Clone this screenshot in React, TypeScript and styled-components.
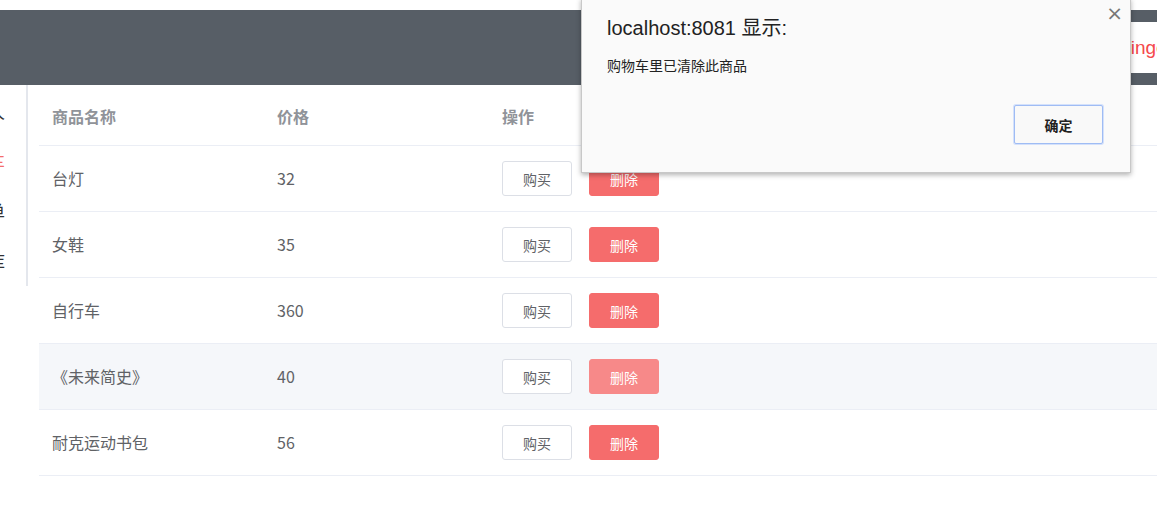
import React from "react";
import styled, { createGlobalStyle, css } from "styled-components";

const Global = createGlobalStyle`
  html, body { margin: 0; padding: 0; background: #fff; overflow: hidden; }
  body { font-family: "Noto Sans CJK SC", "Liberation Sans", sans-serif; width: 1157px; height: 519px; }
  * { box-sizing: border-box; }
`;

const Page = styled.div`
  position: relative;
  padding-top: 10px;
  width: 1157px;
  height: 519px;
  overflow: hidden;
`;

const Header = styled.header`
  height: 75px;
  background: #575e66;
  display: flex;
  align-items: center;
  justify-content: flex-end;
`;

const UserBox = styled.div`
  flex-shrink: 0;
  height: 51px;
  background: #fff;
  display: flex;
  align-items: center;
  padding-left: 20px;
  margin-right: -16px;
  color: #f5484b;
  font-family: "Liberation Sans", "Noto Sans CJK SC", sans-serif;
  font-size: 19px;
  white-space: nowrap;
`;

const Body = styled.div`
  display: flex;
  align-items: flex-start;
`;

const Sidebar = styled.nav`
  width: 28px;
  height: 201px;
  flex-shrink: 0;
  overflow: hidden;
  border-right: 2px solid #e4e7ed;
  padding-top: 1px;
`;

const NavItem = styled.div<{ $active?: boolean }>`
  height: 50px;
  display: flex;
  align-items: center;
  justify-content: flex-end;
  padding-right: 21px;
  font-size: 18px;
  white-space: nowrap;
  color: ${(p) => (p.$active ? "#f56c6c" : "#303133")};
  margin-right: -2px;
  border-right: 2px solid ${(p) => (p.$active ? "#f56c6c" : "transparent")};
`;

const Main = styled.main`
  flex: 1;
  padding-left: 11px;
`;

const Table = styled.div`
  display: flex;
  flex-direction: column;
`;

const Row = styled.div<{ $head?: boolean; $hover?: boolean }>`
  display: grid;
  grid-template-columns: 225px 225px 1fr;
  align-items: center;
  border-bottom: 1px solid #ebeef5;
  height: ${(p) => (p.$head ? "61px" : "66px")};
  background: ${(p) => (p.$hover ? "#f5f7fa" : "#fff")};
  ${(p) =>
    p.$head
      ? css`
          padding-top: 1px;
        `
      : css`
          padding-bottom: 2px;
        `}
`;

const Cell = styled.div<{ $head?: boolean }>`
  padding-left: 13px;
  font-size: 16px;
  color: ${(p) => (p.$head ? "#909399" : "#606266")};
  font-weight: ${(p) => (p.$head ? 700 : 400)};
  white-space: nowrap;
`;

const Actions = styled.div`
  padding-left: 13px;
  display: flex;
  gap: 17px;
  margin-top: 2px;
`;

const Btn = styled.button<{ $danger?: boolean; $hover?: boolean }>`
  width: 70px;
  height: 35px;
  border-radius: 3px;
  font-family: "Noto Sans CJK SC", sans-serif;
  font-size: 14px;
  padding: 0;
  cursor: pointer;
  border: 1px solid ${(p) => (p.$danger ? (p.$hover ? "#f78989" : "#f56c6c") : "#dcdfe6")};
  background: ${(p) => (p.$danger ? (p.$hover ? "#f78989" : "#f56c6c") : "#fff")};
  color: ${(p) => (p.$danger ? "#fff" : "#606266")};
`;

const Dialog = styled.div`
  position: absolute;
  left: 581px;
  top: -2px;
  width: 550px;
  height: 175px;
  background: #fafafa;
  border: 1px solid #c8c8c8;
  border-top: none;
  box-shadow: 0 2px 5px rgba(0, 0, 0, 0.3);
  padding: 17px 26px 0 25px;
  font-family: "Liberation Sans", "Noto Sans CJK SC", sans-serif;
  display: flex;
  flex-direction: column;
`;

const Close = styled.span`
  position: absolute;
  right: 7px;
  top: 3px;
  font-size: 20px;
  color: #777;
  font-family: "DejaVu Sans", sans-serif;
`;

const DTitle = styled.div`
  font-size: 20px;
  color: #222;
  line-height: 26px;
`;

const DMsg = styled.div`
  margin-top: 14px;
  font-size: 14px;
  color: #222;
  font-family: "Noto Sans CJK SC", sans-serif;
`;

const DFooter = styled.div`
  margin-top: 30px;
  display: flex;
  justify-content: flex-end;
`;

const OkBtn = styled.button`
  width: 89px;
  height: 39px;
  margin-right: 1px;
  background: #f9f9f9;
  border: 1px solid #9fbcf4;
  border-radius: 2px;
  box-shadow: 0 0 0 1px #d4e1fb;
  font-family: "Noto Sans CJK SC", sans-serif;
  font-size: 14px;
  font-weight: 700;
  color: #222;
`;

const goods = [
  { name: "台灯", price: 32 },
  { name: "女鞋", price: 35 },
  { name: "自行车", price: 360 },
  { name: "《未来简史》", price: 40, hover: true },
  { name: "耐克运动书包", price: 56 },
];

const nav = ["个人", "购物车", "订单", "仓库"];

export default function App() {
  return (
    <>
      <Global />
      <Page>
        <Header>
          <UserBox>hello, linger</UserBox>
        </Header>
        <Body>
          <Sidebar>
            {nav.map((n, i) => (
              <NavItem key={n} $active={i === 1}>
                {n}
              </NavItem>
            ))}
          </Sidebar>
          <Main>
            <Table>
              <Row $head>
                <Cell $head>商品名称</Cell>
                <Cell $head>价格</Cell>
                <Cell $head>操作</Cell>
              </Row>
              {goods.map((g) => (
                <Row key={g.name} $hover={g.hover}>
                  <Cell>{g.name}</Cell>
                  <Cell>{g.price}</Cell>
                  <Actions>
                    <Btn>购买</Btn>
                    <Btn $danger $hover={g.hover}>
                      删除
                    </Btn>
                  </Actions>
                </Row>
              ))}
            </Table>
          </Main>
        </Body>
        <Dialog>
          <Close>×</Close>
          <DTitle>localhost:8081 显示:</DTitle>
          <DMsg>购物车里已清除此商品</DMsg>
          <DFooter>
            <OkBtn>确定</OkBtn>
          </DFooter>
        </Dialog>
      </Page>
    </>
  );
}
